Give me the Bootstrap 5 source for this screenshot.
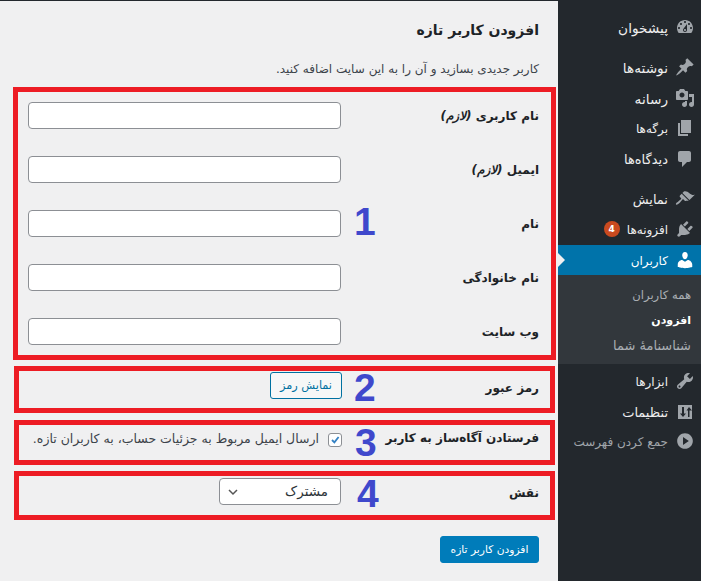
<!DOCTYPE html>
<html lang="fa" dir="rtl">
<head>
<meta charset="utf-8">
<title>افزودن کاربر تازه</title>
<link href="https://cdn.jsdelivr.net/npm/bootstrap@5.3.0/dist/css/bootstrap.min.css" rel="stylesheet">
<style>
html,body{height:581px;overflow:hidden}
body{background:#f0f0f1;color:#1d2327;font-family:"DejaVu Sans",sans-serif;font-size:12px;border-top:1px solid #23282d}
.shell{height:580px}
.side{width:143px;flex:none;background:#23282d;color:#eee;padding-top:10.7px}
.mitem{height:30.6px;padding-right:6px;gap:7px;font-size:13px;line-height:30px;position:relative}
.mitem span:not(.pluginbadge){position:relative;top:1px}
.mitem svg{width:20px;height:20px;fill:#a0a5aa;flex:none}
.t12{font-size:12px}
.t14{font-size:13.7px}
.gap-top{margin-top:9.4px}
.mitem.active-item{background:#0073aa;color:#fff}
.mitem.active-item svg{fill:#fff}
.mitem.active-item::after{content:"";position:absolute;left:0;top:8px;border-style:solid;border-width:7px 0 7px 7px;border-color:transparent transparent transparent #f0f0f1}
.pluginbadge{width:16px;height:16px;border-radius:50%;background:#ca4a1f;color:#fff;font-size:9px;font-weight:700;line-height:16px;text-align:center}
.subm{background:#32373c;padding:8px 10px 0 0;font-size:11.6px;height:89px;margin-bottom:1.5px}
.subm div{height:25px;line-height:25px;color:#a9aeb3}
.subm .cur{color:#fff;font-weight:700;font-size:11px}
.subm .wide{font-size:13px}
.collapsetxt{color:#a0a5aa;font-size:12px;margin-top:-1px}
.content{min-width:0}
.pagetitle{font-size:14px;font-weight:700;line-height:22px;margin:18px 19px 0 0}
.intro{font-size:12px;line-height:16px;margin:20px 19px 10px 0;color:#3c434a}
.redbox{border:5px solid #ed1c24;position:relative;width:541px;margin-right:3px}
.rows1{width:543px;margin-right:2px;padding:10px 0 9px;gap:27px;height:273px}
.box2{margin-top:6px;height:47px;padding-top:1px}
.box3{margin-top:7px;height:45px}
.box4{margin-top:6px;height:49px;padding-top:2px}
.flabel{width:209px;flex:none;font-weight:700;font-size:12px;color:#1d2327;padding-right:11px}
.rows1 .flabel{width:210px;padding-right:12px}
.box2 .flabel{margin-top:7px}
.box3 .flabel{margin-top:4px}
.box4 .flabel{margin-top:6px}
.wpinput{width:313px;height:27px;min-height:0;padding:0 8px;border:1px solid #8c8f94;border-radius:4px;background:#fff;box-shadow:none}
.showbtn{width:72px;height:27px;padding:0;margin-right:-1px;border:1px solid #0071a1;border-radius:3px;background:#f6f7f7;color:#0071a1;font-size:11.3px;line-height:25px}
.num{position:absolute;color:#3f48cc;font:700 39px/1 "Liberation Sans",sans-serif}
.n1{left:336px;top:110px}.n2{left:335px;top:-3px}.n3{left:336px;top:-2px}.n4{left:338px;top:-2px}
.wpcheck{width:14px;height:14px;margin:8px -1px 0 9px;border:1px solid #8c8f94;border-radius:3px;flex:none}
.wpcheck:checked{background-color:#fff;border-color:#8c8f94;background-size:100% 100%;background-image:url("data:image/svg+xml,%3Csvg xmlns='http://www.w3.org/2000/svg' viewBox='0 0 20 20'%3E%3Cpath fill='none' stroke='%233582c4' stroke-width='3' d='M5 10l4 4 7-9'/%3E%3C/svg%3E")}
.notify{font-size:12.5px;color:#3c434a;white-space:nowrap;margin-top:5px}
.wpselect{width:122px;height:27px;padding:0 12px 0 24px;border:1px solid #8c8f94;border-radius:4px;background-color:#fff;font-size:13.5px;line-height:25px;color:#2c3338;background-position:left 5px center;background-size:16px 16px;background-repeat:no-repeat;background-image:url("data:image/svg+xml,%3Csvg xmlns='http://www.w3.org/2000/svg' viewBox='0 0 16 16'%3E%3Cpath fill='none' stroke='%23555' stroke-width='1.5' d='M4 6l4 4 4-4'/%3E%3C/svg%3E")}
.submitbtn{width:99px;height:27px;margin:16px 19px 0 0;padding:0;border:1px solid #007cba;border-radius:3px;background:#007cba;color:#fff;font-size:10.7px;line-height:25px}
</style>
</head>
<body>
<div class="shell d-flex">
  <aside class="side d-flex flex-column">
    <div class="mitem t14 d-flex align-items-center"><svg viewBox="0 0 20 20"><path d="M3.76 16h12.48c1.1-1.37 1.76-3.11 1.76-5 0-4.42-3.58-8-8-8s-8 3.58-8 8c0 1.89.66 3.63 1.76 5zM10 4c.55 0 1 .45 1 1s-.45 1-1 1-1-.45-1-1 .45-1 1-1zM6 6c.55 0 1 .45 1 1s-.45 1-1 1-1-.45-1-1 .45-1 1-1zm8 0c.55 0 1 .45 1 1s-.45 1-1 1-1-.45-1-1 .45-1 1-1zm-5.37 5.55L12 7v6c0 1.1-.9 2-2 2s-2-.9-2-2c0-.57.24-1.08.63-1.45zM4 10c.55 0 1 .45 1 1s-.45 1-1 1-1-.45-1-1 .45-1 1-1zm12 0c.55 0 1 .45 1 1s-.45 1-1 1-1-.45-1-1 .45-1 1-1zm-5 3c0-.55-.45-1-1-1s-1 .45-1 1 .45 1 1 1 1-.45 1-1z"/></svg><span>پیشخوان</span></div>
    <div class="mitem t14 d-flex align-items-center gap-top"><svg viewBox="0 0 20 20"><path d="M10.44 3.02l1.82-1.82 6.36 6.35-1.83 1.82c-1.05-.68-2.48-.57-3.41.36l-.75.75c-.92.93-1.04 2.35-.35 3.41l-1.83 1.82-2.41-2.41-2.8 2.79c-.42.42-3.38 2.71-3.8 2.29s1.86-3.39 2.28-3.81l2.79-2.79L4.1 9.36l1.83-1.82c1.05.69 2.48.57 3.4-.36l.75-.75c.93-.92 1.05-2.35.36-3.41z"/></svg><span>نوشته‌ها</span></div>
    <div class="mitem t14 d-flex align-items-center"><svg viewBox="0 0 20 20"><path d="M13 11V4c0-.55-.45-1-1-1h-1.67L9 1H5L3.67 3H2c-.55 0-1 .45-1 1v7c0 .55.45 1 1 1h10c.55 0 1-.45 1-1zM7 4.5c1.38 0 2.5 1.12 2.5 2.5S8.38 9.5 7 9.5 4.5 8.38 4.5 7 5.62 4.5 7 4.5zM14 6h5v10.5c0 1.38-1.12 2.5-2.5 2.5S14 17.88 14 16.5s1.12-2.5 2.5-2.5c.17 0 .34.02.5.05V9h-3V6zm-4 8.05V13h2v3.5c0 1.38-1.12 2.5-2.5 2.5S7 17.88 7 16.5 8.12 14 9.5 14c.17 0 .34.02.5.05z"/></svg><span>رسانه</span></div>
    <div class="mitem t12 d-flex align-items-center"><svg viewBox="0 0 20 20"><path d="M6 15V2h10v13H6zm-1 1h8v2H3V5h2v11z"/></svg><span>برگه‌ها</span></div>
    <div class="mitem d-flex align-items-center"><svg viewBox="0 0 20 20"><path d="M5 2h9c1.1 0 2 .9 2 2v7c0 1.1-.9 2-2 2h-2l-5 5v-5H5c-1.100 0-2-.9-2-2V4c0-1.100.9-2 2-2z"/></svg><span>دیدگاه‌ها</span></div>
    <div class="mitem d-flex align-items-center gap-top"><svg viewBox="0 0 20 20"><path d="M14.48 11.06L7.41 3.99l1.5-1.5c.5-.56 2.3-.47 3.51.32 1.21.8 1.43 1.28 2.91 2.1 1.18.64 2.45 1.26 4.45.85zm-.71.71L6.7 4.7 4.93 6.47c-.39.39-.39 1.02 0 1.41l1.06 1.06c.39.39.39 1.03 0 1.42-.6.6-1.43 1.11-2.21 1.69-.35.26-.7.53-1.01.84C1.43 13.230.4 14.890 1.080 15.570c.67.67 2.340-.35 3.690-1.700.31-.31.58-.66.85-1.020.57-.78 1.080-1.610 1.690-2.210.39-.39 1.020-.39 1.410 0l1.060 1.060c.39.39 1.020.39 1.410 0z"/></svg><span>نمایش</span></div>
    <div class="mitem t12 d-flex align-items-center"><svg viewBox="0 0 20 20"><path d="M13.11 4.36L9.87 7.6 8 5.73l3.24-3.24c.35-.34 1.05-.2 1.56.32.52.51.66 1.21.31 1.55zm-8 1.77l.91-1.12 9.01 9.01-1.19.84c-.71.71-2.63 1.16-3.82 1.16H6.14L4.9 17.26c-.59.59-1.54.59-2.12 0-.59-.58-.59-1.53 0-2.12l1.24-1.24v-3.88c0-1.13.4-3.19 1.09-3.89zm7.26 3.97l3.24-3.24c.34-.35 1.04-.21 1.55.31.52.51.66 1.21.31 1.55l-3.24 3.25z"/></svg><span>افزونه‌ها</span><span class="pluginbadge">4</span></div>
    <div class="mitem t12 active-item d-flex align-items-center"><svg viewBox="0 0 20 20"><path d="M10 9.25c-2.27 0-2.73-3.44-2.73-3.44C7 4.020 7.820 2 9.970 2c2.160 0 2.980 2.020 2.710 3.810 0 0-.41 3.440-2.680 3.440zm0 2.570L12.720 10c2.390 0 4.520 2.330 4.520 4.530v2.490s-3.650 1.130-7.240 1.130c-3.650 0-7.240-1.130-7.240-1.130v-2.490c0-2.250 1.940-4.480 4.470-4.480z"/></svg><span>کاربران</span></div>
    <div class="subm"><div>همه کاربران</div><div class="cur">افزودن</div><div class="wide">شناسنامهٔ شما</div></div>
    <div class="mitem t12 d-flex align-items-center"><svg viewBox="0 0 20 20"><path d="M16.68 9.77c-1.34 1.34-3.3 1.67-4.95.99l-5.41 6.52c-.99.99-2.59.99-3.58 0s-.99-2.59 0-3.57l6.52-5.42c-.68-1.65-.35-3.61.99-4.95 1.28-1.28 3.12-1.62 4.72-1.06l-2.89 2.89 2.82 2.82 2.86-2.87c.53 1.58.18 3.39-1.08 4.65zM3.81 16.21c.4.39 1.04.39 1.43 0 .4-.4.4-1.04 0-1.43-.39-.4-1.03-.4-1.43 0-.39.39-.39 1.03 0 1.43z"/></svg><span>ابزارها</span></div>
    <div class="mitem d-flex align-items-center"><svg viewBox="0 0 20 20"><path fill-rule="evenodd" d="M3 3h14v14H3zM7 5v6.500H5l3 3.500 3-3.500H9V5zM11.500 8.500H13V15h1.500V8.500H17L14 5z"/></svg><span>تنظیمات</span></div>
    <div class="mitem d-flex align-items-center collapsetxt"><svg viewBox="0 0 20 20"><path d="M10 2.160c4.330 0 7.840 3.510 7.840 7.840s-3.510 7.840-7.840 7.840S2.160 14.330 2.160 10 5.710 2.160 10 2.160zM8 13.880V6.120L13.820 9.970z" fill-rule="evenodd"/></svg><span>جمع کردن فهرست</span></div>
  </aside>
  <main class="content flex-grow-1">
    <h1 class="pagetitle">افزودن کاربر تازه</h1>
    <p class="intro">کاربر جدیدی بسازید و آن را به این سایت اضافه کنید.</p>
    <form>
      <section class="redbox rows1 d-flex flex-column">
        <div class="d-flex align-items-center"><label class="flabel">نام کاربری <em>(لازم)</em></label><input class="form-control wpinput" type="text"></div>
        <div class="d-flex align-items-center"><label class="flabel">ایمیل <em>(لازم)</em></label><input class="form-control wpinput" type="email"></div>
        <div class="d-flex align-items-center"><label class="flabel">نام</label><input class="form-control wpinput" type="text"></div>
        <div class="d-flex align-items-center"><label class="flabel">نام خانوادگی</label><input class="form-control wpinput" type="text"></div>
        <div class="d-flex align-items-center"><label class="flabel">وب سایت</label><input class="form-control wpinput" type="url"></div>
        <span class="num n1">1</span>
      </section>
      <section class="redbox box2 d-flex align-items-start"><span class="flabel">رمز عبور</span><button type="button" class="btn showbtn">نمایش رمز</button><span class="num n2">2</span></section>
      <section class="redbox box3 d-flex align-items-start"><span class="flabel">فرستادن آگاه‌ساز به کاربر</span><input class="form-check-input wpcheck" type="checkbox" checked><span class="notify">ارسال ایمیل مربوط به جزئیات حساب، به کاربران تازه.</span><span class="num n3">3</span></section>
      <section class="redbox box4 d-flex align-items-start"><span class="flabel">نقش</span><select class="form-select wpselect"><option>مشترک</option></select><span class="num n4">4</span></section>
      <button type="button" class="btn submitbtn d-block">افزودن کاربر تازه</button>
    </form>
  </main>
</div>
<script src="https://cdn.jsdelivr.net/npm/bootstrap@5.3.0/dist/js/bootstrap.bundle.min.js"></script>
</body>
</html>
